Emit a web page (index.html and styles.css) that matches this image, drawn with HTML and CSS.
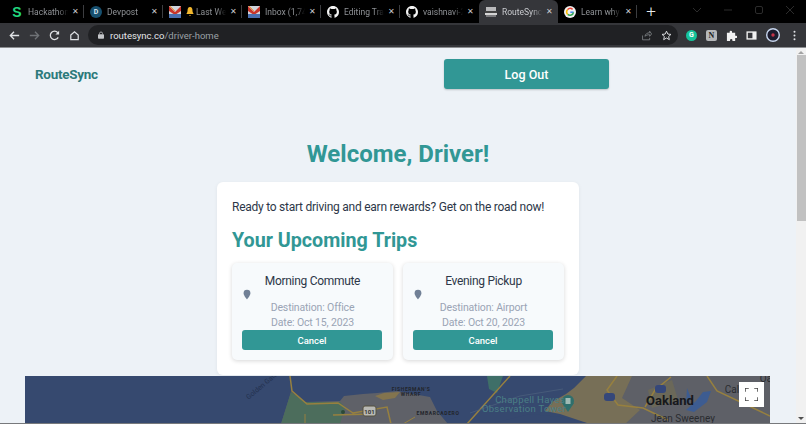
FILE: index.html
```html
<!DOCTYPE html>
<html lang="en">
<head>
<meta charset="utf-8">
<title>RouteSync</title>
<link rel="stylesheet" href="styles.css">
</head>
<body>
<div class="browser">
  <div class="tabstrip">
    <div class="tab">
      <span class="fav fav-s">S</span><span class="tab-title">Hackathon</span><span class="tab-x">✕</span>
    </div>
    <div class="tab">
      <span class="fav fav-d">D</span><span class="tab-title">Devpost</span><span class="tab-x">✕</span>
    </div>
    <div class="tab">
      <svg class="fav" viewBox="0 0 12 12"><rect width="12" height="12" fill="#cfd3dc"/><path d="M0 0 6 6 12 0V5L6 9 0 5Z" fill="#c8352b"/><rect y="8" width="12" height="4" fill="#4a6fb0"/><path d="M1 0 6 5" stroke="#e8a33a"/></svg>
      <span class="tab-title"><svg class="bell" viewBox="0 0 8 9"><path d="M4 0C2 0 1.500 2 1.500 4 1.500 5.500 .5 6 .5 7h7c0-1-1-1.500-1-3C6.500 2 6 0 4 0ZM3 8h2L4 9Z" fill="#f3b82e"/></svg>Last Week</span><span class="tab-x">✕</span>
    </div>
    <div class="tab">
      <svg class="fav" viewBox="0 0 12 12"><rect width="12" height="12" fill="#cfd3dc"/><path d="M0 0 6 6 12 0V5L6 9 0 5Z" fill="#c8352b"/><rect y="8" width="12" height="4" fill="#4a6fb0"/><path d="M1 0 6 5" stroke="#e8a33a"/></svg>
      <span class="tab-title">Inbox (1,745)</span><span class="tab-x">✕</span>
    </div>
    <div class="tab">
      <svg class="fav" viewBox="0 0 16 16"><path fill="#f4f4f4" d="M8 0C3.58 0 0 3.58 0 8c0 3.54 2.29 6.53 5.47 7.59.4.07.55-.17.55-.38 0-.19-.01-.82-.01-1.49-2.01.37-2.53-.49-2.69-.94-.09-.23-.48-.94-.82-1.13-.28-.15-.68-.52-.01-.53.63-.01 1.08.58 1.23.82.72 1.21 1.87.87 2.33.66.07-.52.28-.87.51-1.07-1.78-.2-3.64-.89-3.64-3.95 0-.87.31-1.59.82-2.15-.08-.2-.36-1.02.08-2.12 0 0 .67-.21 2.2.82.64-.18 1.32-.27 2-.27s1.36.09 2 .27c1.53-1.04 2.2-.82 2.2-.82.44 1.1.16 1.92.08 2.12.51.56.82 1.27.82 2.15 0 3.07-1.87 3.75-3.65 3.95.29.25.54.73.54 1.48 0 1.07-.01 1.93-.01 2.2 0 .21.15.46.55.38A8.01 8.01 0 0 0 16 8c0-4.42-3.58-8-8-8z"/></svg>
      <span class="tab-title">Editing Trail</span><span class="tab-x">✕</span>
    </div>
    <div class="tab">
      <svg class="fav" viewBox="0 0 16 16"><path fill="#f4f4f4" d="M8 0C3.58 0 0 3.58 0 8c0 3.54 2.29 6.53 5.47 7.59.4.07.55-.17.55-.38 0-.19-.01-.82-.01-1.49-2.01.37-2.53-.49-2.69-.94-.09-.23-.48-.94-.82-1.13-.28-.15-.68-.52-.01-.53.63-.01 1.08.58 1.23.82.72 1.21 1.87.87 2.33.66.07-.52.28-.87.51-1.07-1.78-.2-3.64-.89-3.64-3.95 0-.87.31-1.59.82-2.15-.08-.2-.36-1.02.08-2.12 0 0 .67-.21 2.2.82.64-.18 1.32-.27 2-.27s1.36.09 2 .27c1.53-1.04 2.2-.82 2.2-.82.44 1.1.16 1.92.08 2.12.51.56.82 1.27.82 2.15 0 3.07-1.87 3.75-3.65 3.95.29.25.54.73.54 1.48 0 1.07-.01 1.93-.01 2.2 0 .21.15.46.55.38A8.01 8.01 0 0 0 16 8c0-4.42-3.58-8-8-8z"/></svg>
      <span class="tab-title">vaishnavi-20</span><span class="tab-x">✕</span>
    </div>
    <div class="tab tab-active">
      <svg class="fav" viewBox="0 0 12 12"><rect x="1" y="1" width="10" height="4" fill="#b9b9bb"/><rect y="5" width="12" height="2" fill="#444"/><rect y="7" width="12" height="2" fill="#d5d5d5"/><rect x="1" y="9" width="10" height="2" fill="#7b7b7e"/></svg>
      <span class="tab-title">RouteSync</span><span class="tab-x">✕</span>
    </div>
    <div class="tab tab-last">
      <svg class="fav" viewBox="0 0 12 12"><circle cx="6" cy="6" r="6" fill="#f2f2f2"/><path d="M9.6 6.2H6.3" stroke="#4285f4" stroke-width="1.5"/><path d="M9.5 6.3A3.6 3.6 0 0 1 3.6 8.4" fill="none" stroke="#34a853" stroke-width="1.5"/><path d="M3.6 8.4A3.6 3.6 0 0 1 3.6 3.6" fill="none" stroke="#fbbc05" stroke-width="1.5"/><path d="M3.6 3.6A3.6 3.6 0 0 1 8.6 3.4" fill="none" stroke="#ea4335" stroke-width="1.5"/></svg>
      <span class="tab-title">Learn why</span><span class="tab-x">✕</span>
    </div>
    <span class="new-tab">+</span>
    <div class="window-controls">
      <svg class="win-icon" viewBox="0 0 10 10"><path d="M1 3 5 7 9 3" fill="none" stroke="#2c2c2c"/></svg>
      <svg class="win-icon" viewBox="0 0 10 10"><path d="M1 5H9" stroke="#2c2c2c"/></svg>
      <svg class="win-icon" viewBox="0 0 10 10"><rect x="1.5" y="1.5" width="7" height="7" rx="1.5" fill="none" stroke="#2c2c2c"/></svg>
      <svg class="win-icon" viewBox="0 0 10 10"><path d="M1 1 9 9M9 1 1 9" stroke="#2c2c2c"/></svg>
    </div>
  </div>

  <div class="toolbar">
    <div class="nav-icons">
      <svg class="tool-icon" viewBox="0 0 14 14"><path d="M12 7H3M6.500 3 2.500 7l4 4" fill="none" stroke="#e0e2e5" stroke-width="1.400"/></svg>
      <svg class="tool-icon" viewBox="0 0 14 14"><path d="M2 7H11M7.500 3l4 4-4 4" fill="none" stroke="#6f7276" stroke-width="1.400"/></svg>
      <svg class="tool-icon" viewBox="0 0 14 14"><path d="M11 9A4.500 4.500 0 1 1 10.500 4" fill="none" stroke="#e0e2e5" stroke-width="1.400"/><path d="M12 2v4H8z" fill="#e0e2e5"/></svg>
      <svg class="tool-icon" viewBox="0 0 14 14"><path d="M3 6.500 7 3l4 3.500V11.500H3z" fill="none" stroke="#e0e2e5" stroke-width="1.300"/></svg>
    </div>
    <div class="omnibox">
      <svg class="lock" viewBox="0 0 8 10"><path d="M2 4V3a2 2 0 0 1 4 0v1" fill="none" stroke="#c4c6c9"/><rect y="4" width="8" height="6" rx="1" fill="#c4c6c9"/></svg>
      <span class="url"><span class="url-host">routesync.co</span>/driver-home</span>
      <svg class="omni-icon" viewBox="0 0 14 14"><path d="M2 7v5.500h9V10M5 8c.5-3 3-4.500 6-4.500V1.500L13.500 5 11 8V6C8.500 6 6.500 6.500 5 8Z" fill="none" stroke="#85888c"/></svg>
      <svg class="omni-icon" viewBox="0 0 14 14"><path d="M7 1.500 8.700 5.200l4 .4-3 2.700.9 4L7 10.200l-3.600 2.100.9-4-3-2.700 4-.4Z" fill="none" stroke="#e0e2e5" stroke-width="1.200"/></svg>
    </div>
    <div class="extensions">
      <span class="ext ext-grammarly">G</span>
      <span class="ext ext-notion">N</span>
      <svg class="ext" viewBox="0 0 12 12"><path d="M1 3h3V2a1.300 1.300 0 0 1 2.600 0v1H10v3.200h1a1.300 1.300 0 0 1 0 2.600h-1V12H7V11a1.300 1.300 0 0 0-2.600 0v1H1Z" fill="#f1f1f1"/></svg>
      <svg class="ext" viewBox="0 0 12 12"><rect x=".5" y="1.500" width="11" height="9" fill="#f1f1f1"/><rect x="2" y="3" width="5" height="6" fill="#35363a"/></svg>
      <svg class="ext ext-avatar" viewBox="0 0 14 14"><circle cx="7" cy="7" r="6.300" fill="#1c1c2e" stroke="#c7d6ee" stroke-width="1.400"/><circle cx="7" cy="7" r="1.700" fill="#c5344a"/></svg>
      <svg class="ext" viewBox="0 0 12 12"><circle cx="6" cy="2" r="1.100" fill="#e0e2e5"/><circle cx="6" cy="6" r="1.100" fill="#e0e2e5"/><circle cx="6" cy="10" r="1.100" fill="#e0e2e5"/></svg>
    </div>
  </div>

  <div class="viewport">
    <div class="page">
      <nav class="site-nav">
        <span class="logo">RouteSync</span>
        <button class="logout">Log Out</button>
      </nav>
      <h1 class="welcome">Welcome, Driver!</h1>
      <section class="panel">
        <p class="lead">Ready to start driving and earn rewards? Get on the road now!</p>
        <h2 class="panel-title">Your Upcoming Trips</h2>
        <div class="trips">
          <article class="trip">
            <svg class="pin" viewBox="0 0 10 12"><path d="M5 0a4.300 4.300 0 0 1 4.300 4.300C9.300 7 5 12 5 12S.7 7 .7 4.300A4.300 4.300 0 0 1 5 0Z" fill="#718096"/></svg>
            <h3 class="trip-title">Morning Commute</h3>
            <p class="trip-line trip-dest">Destination: Office</p>
            <p class="trip-line">Date: Oct 15, 2023</p>
            <button class="cancel">Cancel</button>
          </article>
          <article class="trip">
            <svg class="pin" viewBox="0 0 10 12"><path d="M5 0a4.300 4.300 0 0 1 4.300 4.300C9.300 7 5 12 5 12S.7 7 .7 4.300A4.300 4.300 0 0 1 5 0Z" fill="#718096"/></svg>
            <h3 class="trip-title">Evening Pickup</h3>
            <p class="trip-line trip-dest">Destination: Airport</p>
            <p class="trip-line">Date: Oct 20, 2023</p>
            <button class="cancel">Cancel</button>
          </article>
        </div>
      </section>
      <div class="map">
        <svg class="map-art" viewBox="25 376 745 48" preserveAspectRatio="none">
          <rect x="25" y="376" width="745" height="48" fill="#36496f"/>
          <path d="M291 392 305 402 340 401 344 396 363 394 377 393 397 391 413 394 430 397 437 411 448 424H281Z" fill="#5f6168"/>
          <path d="M291 392 305 402 340 402 345 407 340 424H281Z" fill="#4c6d5c"/>
          <path d="M375 396 384 393 400 392 395 398 383 400Z" fill="#83744e"/>
          <path d="M487 376H503L497 393 489 389Z" fill="#3f6f68"/>
          <path d="M586 376 574 388 566 394 552 402 545 411 560 414 590 424H770V376Z" fill="#776f57"/>
          <path d="M632 376H770V424H625L640 410 622 398Z" fill="#5e6067"/>
          <path d="M648 390 672 380 678 400 652 408Z" fill="#6b6859"/>
          <path d="M686 410 696 401 703 392 711 391 707 402 694 412Z" fill="#3d5c91"/>
          <path d="M687 388 691 398 686 404Z" fill="#3d5c91"/>
          <path d="M490 424 530 414 560 417 590 424Z" fill="#36496f"/>
          <path d="M290 376 292 391 307 404 338 403 353 413 387 407 391 424M467 424 510 376M617 376 607 390 618 405 643 408 668 420M671 377 655 390 645 407M707 376 717 391 770 416M333 415 373 414" fill="none" stroke="#97803f" stroke-width="1.500"/>
          <path d="M305 414V424M403 424 415 417" fill="none" stroke="#97803f" stroke-width="1"/>
          <path d="M470 413 520 396 563 389" fill="none" stroke="#4d617e" stroke-width=".7"/>
          <circle cx="343" cy="412" r="2" fill="#2c4a38"/>
          <rect x="363" y="406" width="13" height="10" rx="2" fill="#b9b9b4" stroke="#55503f"/>
          <text class="map-shield" x="369.500" y="413.500">101</text>
          <rect x="604" y="393" width="11" height="8" rx="3" fill="#35477a"/>
          <rect x="655" y="385" width="11" height="8" rx="3" fill="#35477a"/>
          <circle cx="568" cy="401" r="6" fill="#2f6f6c"/><path d="M562 403 568 412 574 403Z" fill="#2f6f6c"/>
          <rect x="565.500" y="398" width="5" height="6" fill="#9fbab4"/>
          <text class="map-water-label" transform="rotate(-40 262 386)" x="262" y="388">Golden Gate</text>
          <text class="map-small" x="411" y="391">FISHERMAN'S</text>
          <text class="map-small" x="411" y="396">WHARF</text>
          <text class="map-small" x="438" y="415">EMBARCADERO</text>
          <text class="map-teal" x="530" y="403">Chappell Hayes</text>
          <text class="map-teal" x="524" y="412">Observation Tower</text>
          <text class="map-city" x="670" y="405">Oakland</text>
          <text class="map-area" x="683" y="422">Jean Sweeney</text>
          <text class="map-area" x="732" y="393">Cal</text>
          <text class="map-area" x="766" y="382">Oa</text>
        </svg>
        <button class="fullscreen" aria-label="Fullscreen">
          <svg viewBox="0 0 12 12"><path d="M0 3.500V0H3.500M8.500 0H12V3.500M12 8.500V12H8.500M3.500 12H0V8.500" fill="none" stroke="#444" stroke-width="1.400"/></svg>
        </button>
      </div>
    </div>
    <div class="scrollbar">
      <span class="arrow-up"></span>
      <span class="thumb"></span>
      <span class="arrow-down"></span>
    </div>
  </div>
  <div class="window-edge"></div>
</div>
</body>
</html>
```

FILE: styles.css
```css
* { box-sizing: border-box; }
html, body { margin: 0; height: 100%; overflow: hidden; }
body { font-family: Roboto, "Open Sans", sans-serif; background: #000; }
.browser { width: 806px; height: 424px; display: flex; flex-direction: column; overflow: hidden; }

/* tab strip */
.tabstrip { height: 23px; flex: none; display: flex; align-items: stretch; padding-left: 5px; background: #000; position: relative; }
.tab { width: 79px; flex: none; display: flex; align-items: center; padding: 0 4px 0 6px; position: relative; color: #8f9296; font-size: 8.500px; }
.tab::after { content: ""; position: absolute; right: 0; top: 5px; bottom: 5px; width: 1px; background: #3c3d40; }
.tab-active { background: #35363a; color: #c9cbcf; border-radius: 6px 6px 0 0; }
.tab-active::after, .tab:nth-child(6)::after { display: none; }
.fav { width: 12px; height: 12px; flex: none; }
.fav-s { color: #22d67e; font-weight: 800; font-size: 14px; line-height: 12px; text-align: center; font-family: "Liberation Sans", sans-serif; }
.fav-d { color: #dbe7f0; background: #17506f; border-radius: 50%; font-size: 7px; font-weight: 700; line-height: 12px; text-align: center; }
.tab-title { flex: 1; min-width: 0; padding-left: 5px; white-space: nowrap; overflow: hidden; -webkit-mask-image: linear-gradient(90deg, #000 75%, transparent 96%); mask-image: linear-gradient(90deg, #000 75%, transparent 96%); }
.bell { width: 8px; height: 9px; margin-right: 2px; vertical-align: -1px; }
.tab-x { width: 10px; flex: none; font-size: 8px; color: #c9cbcf; text-align: center; }
.new-tab { width: 28px; color: #e8eaed; font-size: 17px; line-height: 22px; text-align: center; font-weight: 300; }
.window-controls { margin-left: auto; display: flex; gap: 21px; align-items: center; padding: 0 11px 4px 0; }
.win-icon { width: 10px; height: 10px; }

/* toolbar */
.toolbar { height: 24px; flex: none; display: flex; align-items: center; background: #35363a; }
.nav-icons { display: flex; gap: 7px; width: 88px; padding-left: 8px; flex: none; }
.tool-icon { width: 13px; height: 13px; }
.omnibox { width: 590px; height: 20px; flex: none; background: #202124; border-radius: 10px; display: flex; align-items: center; padding: 0 6px 0 10px; }
.lock { width: 6px; height: 8px; flex: none; }
.url { margin-left: 6px; font-size: 9.500px; color: #9aa0a6; flex: 1; }
.url-host { color: #e3e5e8; }
.omni-icon { width: 11px; height: 11px; flex: none; margin-left: 9px; }
.extensions { display: flex; align-items: center; gap: 9px; padding-left: 8px; }
.ext { width: 11px; height: 11px; flex: none; }
.ext-grammarly { background: #15c39a; color: #fff; border-radius: 50%; font-size: 7px; font-weight: 700; line-height: 11px; text-align: center; }
.ext-notion { background: #b6b8ba; color: #222; border-radius: 2px; font-size: 8px; font-weight: 700; line-height: 11px; text-align: center; font-family: "Liberation Serif", serif; }
.ext-avatar { width: 14px; height: 14px; }

/* viewport */
.viewport { flex: 1; min-height: 0; display: flex; background: #edf2f7; border-top: 1px solid #8b8d90; }
.page { width: 796px; flex: none; overflow: hidden; }
.site-nav { display: flex; justify-content: space-between; align-items: center; padding: 11px 187px 0 35px; }
.logo { font-size: 13.500px; letter-spacing: -.3px; font-weight: 700; color: #2c7a7b; }
.logout { width: 165px; height: 30px; background: #319795; color: #fff; border: 0; border-radius: 3px; font: 500 12.500px Roboto, sans-serif; box-shadow: 0 1px 2px rgba(0,0,0,.2); padding: 0; }
.welcome { margin: 48px 0 0; text-align: center; font-size: 24px; line-height: 34px; font-weight: 700; color: #319795; }
.panel { width: 362px; margin: 11px auto 0; background: #fff; border-radius: 6px; padding: 15px; box-shadow: 0 1px 4px rgba(0,0,0,.06); }
.lead { margin: 0; padding-top: 1px; font-size: 12px; letter-spacing: -.25px; line-height: 18px; color: #2d3748; white-space: nowrap; }
.panel-title { margin: 11px 0 8px; font-size: 19.700px; line-height: 28px; font-weight: 700; color: #319795; }
.trips { display: grid; grid-template-columns: 161px 161px; gap: 10px; }
.trip { position: relative; height: 97px; padding: 10px; background: #f7fafc; border-radius: 5px; box-shadow: 0 1px 4px rgba(0,0,0,.16); text-align: center; }
.pin { position: absolute; left: 11px; top: 26px; width: 8px; height: 11px; }
.trip-title { margin: 0; font-size: 12px; letter-spacing: -.3px; line-height: 16px; font-weight: 400; color: #2d3748; }
.trip-line { margin: 0; font-size: 10.500px; letter-spacing: -.15px; line-height: 15px; color: #9aa4b5; }
.trip-dest { margin-top: 10.500px; }
.cancel { display: block; width: 140px; height: 20px; margin-top: .500px; background: #319795; color: #fff; border: 0; border-radius: 3px; font: 500 9.500px Roboto, sans-serif; padding: 0; }

/* map */
.map { position: relative; width: 745px; height: 48px; margin: 1px 0 0 25px; overflow: hidden; }
.map-art { display: block; width: 100%; height: 100%; }
.map text { text-anchor: middle; font-family: Roboto, sans-serif; }
.map .map-shield { font-size: 6px; font-weight: 700; fill: #333; }
.map .map-water-label { font-size: 7px; fill: #24324f; }
.map .map-small { font-size: 5px; font-weight: 700; letter-spacing: .6px; fill: #22252b; }
.map .map-teal { font-size: 9.500px; letter-spacing: .3px; fill: #4a7f86; }
.map .map-city { font-size: 13px; font-weight: 700; fill: #17181c; }
.map .map-area { font-size: 10px; fill: #2a2c30; }
.fullscreen { position: absolute; left: 714px; top: 6px; width: 25px; height: 25px; padding: 6px; border: 0; background: #fff; }
.fullscreen svg { display: block; width: 13px; height: 13px; }

/* scrollbar */
.scrollbar { width: 10px; flex: none; display: flex; flex-direction: column; align-items: center; background: #f1f1f1; }
.arrow-up { margin-top: 3px; border: 3px solid transparent; border-top: 0; border-bottom: 3px solid #a3a3a3; }
.thumb { width: 9px; height: 166px; margin-top: 1px; background: #c1c1c1; }
.arrow-down { margin-top: auto; margin-bottom: 3px; border: 3px solid transparent; border-bottom: 0; border-top: 3px solid #505050; }
.window-edge { height: 1px; flex: none; background: #77797c; }
```
